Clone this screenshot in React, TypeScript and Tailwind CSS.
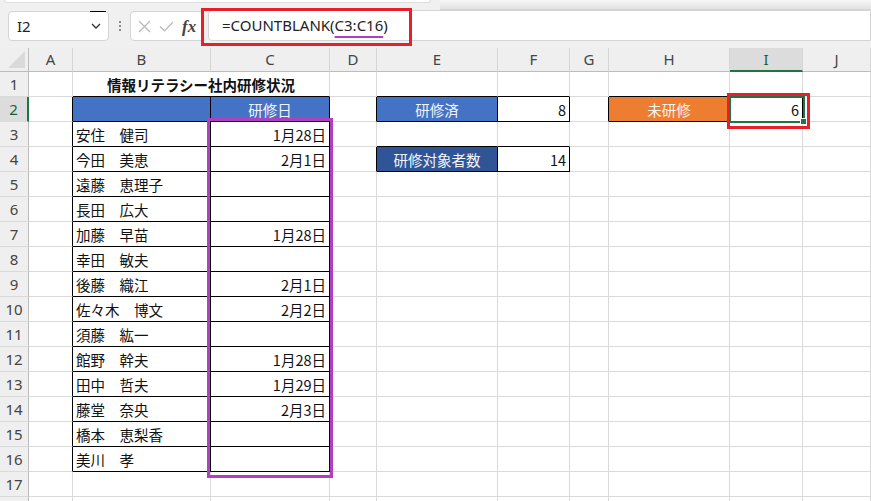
import React from 'react';

const letters = ['A', 'B', 'C', 'D', 'E', 'F', 'G', 'H', 'I', 'J'];

const names: Record<number, string> = {
  3: '安住　健司',
  4: '今田　美恵',
  5: '遠藤　恵理子',
  6: '長田　広大',
  7: '加藤　早苗',
  8: '幸田　敏夫',
  9: '後藤　織江',
  10: '佐々木　博文',
  11: '須藤　紘一',
  12: '館野　幹夫',
  13: '田中　哲夫',
  14: '藤堂　奈央',
  15: '橋本　恵梨香',
  16: '美川　孝',
};

const dates: Record<number, string> = {
  3: '1月28日',
  4: '2月1日',
  7: '1月28日',
  9: '2月1日',
  10: '2月2日',
  12: '1月28日',
  13: '1月29日',
  14: '2月3日',
};

type CellSpec = {
  text?: string;
  align?: 'l' | 'r' | 'c';
  fill?: 'blue' | 'navy' | 'orange';
  bold?: boolean;
  span?: number;
};

// which edges of a cell carry the black table border
const rightBlack = (r: number, c: number) => {
  if (c <= 2 && r >= 2 && r <= 16) return true;
  if (c >= 3 && c <= 5 && (r === 2 || r === 4)) return true;
  if (c >= 6 && c <= 8 && r === 2) return true;
  return false;
};

const bottomBlack = (r: number, c: number) => {
  if ((c === 1 || c === 2) && r >= 1 && r <= 16) return true;
  if ((c === 4 || c === 5) && r >= 1 && r <= 4) return true;
  if ((c === 7 || c === 8) && r >= 1 && r <= 2) return true;
  return false;
};

const spec = (r: number, c: number): CellSpec | null => {
  if (r === 1 && c === 1) return { text: '情報リテラシー社内研修状況', align: 'c', bold: true, span: 2 };
  if (r === 1 && c === 2) return null;
  if (r === 2 && c === 1) return { fill: 'blue' };
  if (r === 2 && c === 2) return { text: '研修日', align: 'c', fill: 'blue' };
  if (c === 1 && names[r]) return { text: names[r], align: 'l' };
  if (c === 2 && dates[r]) return { text: dates[r], align: 'r' };
  if (r === 2 && c === 4) return { text: '研修済', align: 'c', fill: 'blue' };
  if (r === 2 && c === 5) return { text: '8', align: 'r' };
  if (r === 4 && c === 4) return { text: '研修対象者数', align: 'c', fill: 'navy' };
  if (r === 4 && c === 5) return { text: '14', align: 'r' };
  if (r === 2 && c === 7) return { text: '未研修', align: 'c', fill: 'orange' };
  if (r === 2 && c === 8) return { text: '6', align: 'r' };
  return {};
};

const fillClass = { blue: 'bg-[#4472c4] text-[#f2f4fa]', navy: 'bg-[#2f5597] text-[#f2f4fa]', orange: 'bg-[#ed7d31] text-[#fdf3ec]' };
const alignClass = { l: 'justify-start', r: 'justify-end', c: 'justify-center' };

const Cell = ({ r, c }: { r: number; c: number }) => {
  const s = spec(r, c);
  if (s === null) return null;
  const lastC = s.span ? c + s.span - 1 : c;
  return (
    <div
      className={`flex h-[25px] items-center overflow-hidden whitespace-nowrap border-r border-b px-[3px] pt-[2px] text-[14.5px] leading-none text-[#111] ${
        s.span === 2 ? 'col-span-2' : ''
      } ${rightBlack(r, lastC) ? 'border-r-black' : 'border-r-[#dadada]'} ${
        bottomBlack(r, c) ? 'border-b-black' : 'border-b-[#dadada]'
      } ${s.fill ? fillClass[s.fill] : 'bg-white'} ${alignClass[s.align ?? 'l']} ${s.bold ? 'font-bold' : ''}`}
    >
      {s.text}
    </div>
  );
};

const FormulaBar = () => (
  <div className="relative flex h-[48px] items-start bg-[#f0f0f0] pl-[8px] pt-[11px]">
    <div className="absolute left-[4px] right-[440px] top-0 h-[3px] rounded-b-[4px] border-b border-x border-[#dedede] bg-white" />
    <div className="absolute left-[440px] right-0 top-0 h-[10px] border-b border-[#d4d4d4] bg-gradient-to-b from-[#f7f7f7] to-[#e2e2e2]" />
    <div className="relative flex h-[30px] w-[101px] items-center justify-between rounded-[4px] border border-[#d4d4d4] bg-white pl-[8px] pr-[7px] font-['Noto_Sans',sans-serif] text-[15px] text-[#222]">
      <div className="absolute right-[2px] top-[-1px] h-[1px] w-[16px] bg-black" />
      <span>I2</span>
      <svg width="10" height="6" viewBox="0 0 10 6">
        <path d="M1 1 L5 5 L9 1" fill="none" stroke="#333" strokeWidth="1.3" />
      </svg>
    </div>
    <div className="flex h-[30px] w-[21px] flex-col items-center justify-center gap-[2px]">
      <div className="h-[2px] w-[2px] bg-[#8a8a8a]" />
      <div className="h-[2px] w-[2px] bg-[#8a8a8a]" />
      <div className="h-[2px] w-[2px] bg-[#8a8a8a]" />
    </div>
    <div className="flex h-[30px] w-[74px] items-center gap-[8px] rounded-l-[4px] border border-[#d4d4d4] bg-white pl-[7px]">
      <svg width="13" height="13" viewBox="0 0 13 13">
        <path d="M1 1 L12 12 M12 1 L1 12" stroke="#b8b8b8" strokeWidth="1.2" />
      </svg>
      <svg width="15" height="11" viewBox="0 0 15 11">
        <path d="M1 5.5 L5.5 10 L14 1" fill="none" stroke="#b8b8b8" strokeWidth="1.2" />
      </svg>
      <span className="font-['Liberation_Serif',serif] text-[17px] font-bold italic leading-none text-[#444]">fx</span>
    </div>
    <div className="ml-[4px] mt-[-1px] flex h-[31px] flex-1 items-center whitespace-pre rounded-l-[4px] border border-[#d4d4d4] bg-white pl-[13px] font-['Noto_Sans',sans-serif] text-[15px] text-[#222]">
      =COUNTBLANK(
      <span className="underline decoration-[#b13fc1] decoration-2 underline-offset-[5px]">C3:C16</span>)
    </div>
  </div>
);

export default function App() {
  const rows = Array.from({ length: 18 }, (_, i) => i + 1);
  return (
    <div className="relative h-[501px] w-[871px] overflow-hidden bg-[#f0f0f0] font-['Noto_Sans_CJK_JP',sans-serif]">
      <FormulaBar />
      <div className="grid grid-cols-[29px_44px_138px_119px_47px_121px_72px_39px_121px_73px_68px] bg-white">
        {/* header row */}
        <div className="relative h-[24px] border-r border-b border-[#bcbcbc] bg-[#efefef]">
          <svg className="absolute bottom-[3px] right-[3px]" width="17" height="17" viewBox="0 0 17 17">
            <path d="M17 0 L17 17 L0 17 Z" fill="#dadada" />
          </svg>
        </div>
        {letters.map((l) => (
          <div
            key={l}
            className={`flex h-[24px] items-center justify-center border-r border-r-[#d6d6d6] font-['Noto_Sans',sans-serif] text-[15px] ${
              l === 'I'
                ? 'border-b-2 border-b-[#217346] bg-[#dcdcdc] text-[#1f5c3c]'
                : 'border-b border-b-[#bcbcbc] bg-[#efefef] text-[#444]'
            }`}
          >
            {l}
          </div>
        ))}
        {rows.map((r) => (
          <React.Fragment key={r}>
            <div
              className={`flex h-[25px] items-center justify-center border-b border-b-[#dadada] pt-[1px] font-['Noto_Sans',sans-serif] text-[15px] ${
                r === 2
                  ? 'border-r-2 border-r-[#217346] bg-[#dcdcdc] text-[#1f5c3c]'
                  : 'border-r border-r-[#bcbcbc] bg-[#efefef] text-[#444]'
              }`}
            >
              {r < 18 ? r : ''}
            </div>
            {letters.map((_, c) => (
              <Cell key={c} r={r} c={c} />
            ))}
          </React.Fragment>
        ))}
      </div>

      {/* annotations and selection */}
      <div className="absolute left-[201px] top-[8px] h-[38px] w-[211px] border-[3px] border-[#e5202a]" />
      <div className="absolute left-[207px] top-[118px] h-[360px] w-[126px] border-[3px] border-[#b13fc1]" />
      <div className="absolute left-[729px] top-[96px] h-[27px] w-[76px] border-2 border-[#217346]" />
      <div className="absolute left-[800px] top-[118px] h-[7px] w-[7px] border border-white bg-[#217346]" />
      <div className="absolute left-[727px] top-[93px] h-[36px] w-[83px] border-[3px] border-[#e5202a]" />
    </div>
  );
}
